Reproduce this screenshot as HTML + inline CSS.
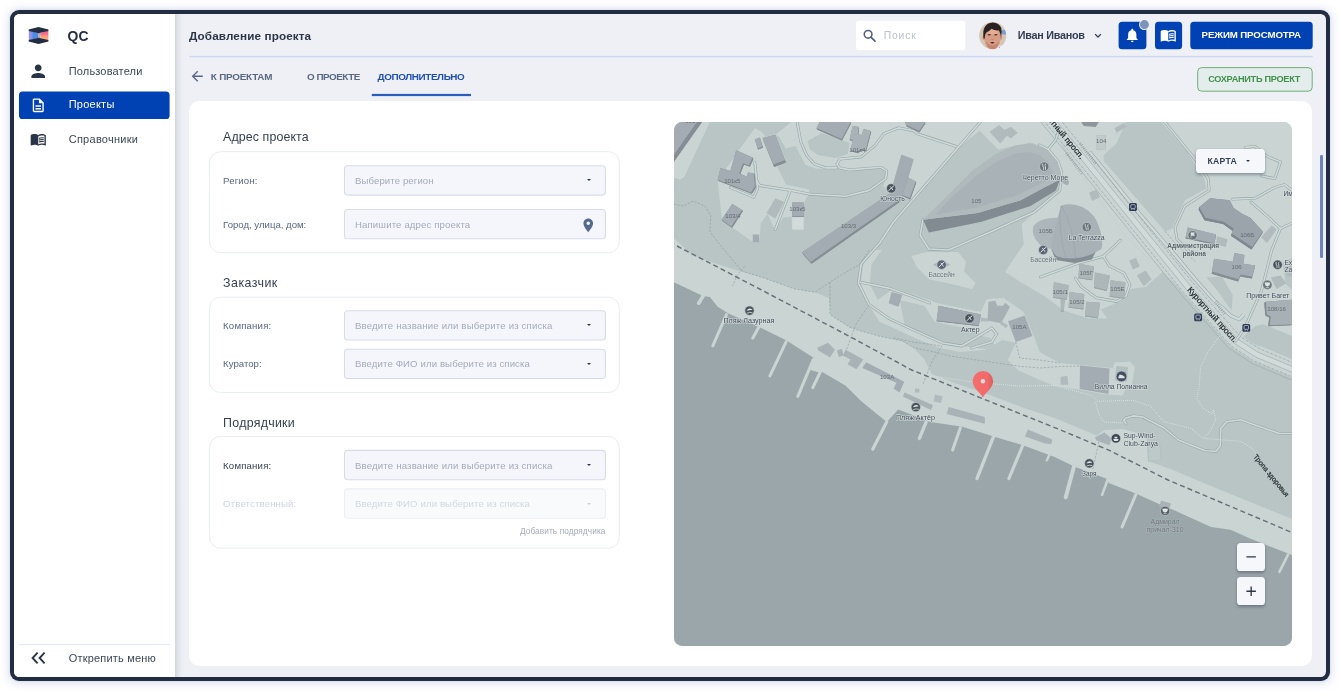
<!DOCTYPE html>
<html lang="ru">
<head>
<meta charset="utf-8">
<title>Добавление проекта</title>
<style>
*{box-sizing:border-box;margin:0;padding:0}
html,body{width:1340px;height:691px;overflow:hidden;background:#fff}
body{position:relative;font-family:"Liberation Sans","DejaVu Sans",sans-serif;-webkit-font-smoothing:antialiased}
.abs,.t,.box{position:absolute}
.t{white-space:nowrap;line-height:1;z-index:5}
.frame{left:10px;top:10px;width:1320px;height:670.6px;border-radius:9px;background:#232d41;
  box-shadow:0 1px 10px 2px rgba(120,130,190,.22),0 0 3px rgba(120,130,190,.25)}
.inner{left:13.6px;top:13.6px;width:1312.8px;height:663.4px;border-radius:5.5px;background:#eef0f5;overflow:hidden}
.side{left:0;top:0;width:161.6px;height:100%;background:#fff}
.sideshadow{left:161.6px;top:0;width:10px;height:100%;background:linear-gradient(90deg,rgba(196,199,208,.62),rgba(212,215,223,.42) 35%,rgba(228,230,236,.18) 70%,rgba(238,240,245,0))}
.active{left:19px;top:91.6px;width:150.6px;height:27.5px;border-radius:3.6px;background:#0041b4}
.sep{left:19.1px;top:644.2px;width:150.4px;height:1px;background:#dfe5fb}
.hline{left:189px;top:55.9px;width:1123.7px;height:1.4px;background:#cfd7f6}
.search{left:856px;top:20.8px;width:109.3px;height:29.3px;border-radius:2.8px;background:#fff}
.btn{border-radius:3.4px;background:#0041b4}
.save{left:1197.2px;top:67.1px;width:115.5px;height:24.6px;border-radius:4.2px;border:1px solid #74ae7b;background:#e3edeb}
.tabline{left:371.9px;top:94px;width:99.2px;height:2.1px;background:#2a5bbd}
.panel{left:189px;top:101px;width:1123px;height:565px;border-radius:10.3px;background:#fff}
.card{left:209.1px;width:410.7px;border-radius:11.5px;border:1px solid #eaedf5;background:#fff;box-shadow:0 0 2px rgba(222,226,240,.35)}
.inp{left:344.2px;width:261.3px;height:29.8px;border-radius:3.6px;border:1px solid #d6dbea;background:#f4f5fa}
.inp.dis{border-color:#eceef5;background:#f8f9fc}
.caret{width:0;height:0;border-left:2.35px solid transparent;border-right:2.35px solid transparent;border-top:2.7px solid #2c3648}
.mapwrap{left:674.3px;top:122px;width:618px;height:524px;border-radius:8.5px;overflow:hidden;background:#c5d1d0}
svg.map{position:absolute;left:0;top:0;display:block}
.mbtn{background:#f6f7fb;border-radius:3.6px;box-shadow:0 1.5px 3px rgba(40,50,70,.38)}
.scroll{left:1320.3px;top:155px;width:2.4px;height:103px;border-radius:1.2px;background:#6c84ba}
svg.ic{position:absolute;overflow:visible}
</style>
</head>
<body>
<div class="abs" id="root" style="left:0;top:0;width:1340px;height:691px;will-change:transform">
<div class="abs frame"></div>
<div class="abs inner">
  <div class="abs side"></div>
  <div class="abs sideshadow"></div>
</div>

<!-- shapes (SVG for sub-pixel edges) -->
<svg class="ic" style="left:0;top:0" width="1340" height="691" viewBox="0 0 1340 691">
<rect x="19" y="91.5" width="150.6" height="27.5" rx="3.6" fill="#0041b4"/>
<rect x="19.1" y="644.1" width="150.4" height="1" fill="#dfe5fb"/>
<rect x="189" y="55.9" width="1123.7" height="1.4" fill="#cfd7f6"/>
<rect x="856" y="20.8" width="109.3" height="29.3" rx="2.8" fill="#fff"/>
<rect x="1118.6" y="21.8" width="27.8" height="27.4" rx="3.5" fill="#0041b4"/>
<rect x="1155" y="21.8" width="27.1" height="27.4" rx="3.5" fill="#0041b4"/>
<rect x="1190.3" y="21.8" width="122.4" height="27.4" rx="3.5" fill="#0041b4"/>
<circle cx="1144.4" cy="24.6" r="5.4" fill="#eef0f5"/><circle cx="1144.4" cy="24.6" r="4.5" fill="#7d93ba"/>
<rect x="1197.7" y="67.6" width="114.5" height="23.6" rx="4" fill="#e3edeb" stroke="#74ae7b" stroke-width="1"/>
<rect x="371.8" y="93.9" width="99.2" height="2.2" fill="#2a5bbd"/>
</svg>
<div class="abs panel"></div>
<svg class="ic" style="left:0;top:0" width="1340" height="691" viewBox="0 0 1340 691">
<g fill="#fff" stroke="#e9ecf4" stroke-width="1">
<rect x="209.6" y="151.7" width="409.7" height="101" rx="11"/>
<rect x="209.6" y="297.2" width="409.7" height="95.4" rx="11"/>
<rect x="209.6" y="436.4" width="409.7" height="111.8" rx="11"/>
</g>
<g fill="#f5f6fb" stroke="#d8dcea" stroke-width="1.1">
<rect x="344.5" y="165.8" width="260.9" height="29.3" rx="3.3"/>
<rect x="344.5" y="209.5" width="260.9" height="29.3" rx="3.3"/>
<rect x="344.5" y="310.7" width="260.9" height="29.3" rx="3.3"/>
<rect x="344.5" y="349.2" width="260.9" height="29.3" rx="3.3"/>
<rect x="344.5" y="450.4" width="260.9" height="29.3" rx="3.3"/>
</g>
<rect x="344.5" y="488.9" width="260.900" height="29.300" rx="3.300" fill="#f9fafc" stroke="#eceef5" stroke-width="1.100"/>
</svg>

<div class="abs caret" style="left:587px;top:179.4px"></div>
<div class="abs caret" style="left:587px;top:324.4px"></div>
<div class="abs caret" style="left:587px;top:362.9px"></div>
<div class="abs caret" style="left:587px;top:464.2px"></div>
<div class="abs caret" style="left:587px;top:502.7px;border-top-color:#cdd2dd"></div>

<!-- map -->
<div class="abs mapwrap">
<svg class="map" viewBox="674.3 122 618 524" width="618" height="524" font-family="'Liberation Sans','DejaVu Sans',sans-serif">
<rect x="670" y="118" width="630" height="536" fill="#c9d4d3"/>
<polygon points="674.0,122.0 1050.0,122.0 1060.0,140.0 1075.0,165.0 1100.0,200.0 1125.0,235.0 1146.0,256.0 1185.0,293.0 1226.0,338.0 1255.0,357.0 1292.5,373.0 1292.5,519.0 1250.4,502.0 1199.7,481.2 1173.4,469.9 1148.4,461.0 1147.0,438.0 1138.0,433.0 1123.0,429.0 1104.8,430.0 1097.0,435.5 1055.0,417.9 1027.2,409.1 986.1,393.5 956.8,383.7 932.4,373.9 925.0,360.0 914.0,347.7 902.6,340.9 879.2,336.0 857.7,330.1 849.9,327.2 836.2,318.4 831.0,315.0 829.0,298.0 815.1,292.2 794.4,288.8 764.3,277.9 736.1,270.0 693.5,256.0 674.0,238.0" fill="#b8c5c4"/>
<polygon points="701.4,122.0 710.2,122.0 684.7,176.7 680.8,179.7 674.0,177.7 674.0,161.0" fill="#c9d4d3"/>
<polygon points="755.1,127.9 761.4,131.4 765.9,136.7 775.6,134.0 786.5,161.1 777.6,167.0 786.4,184.5 809.8,189.4 808.8,194.3 804.5,202.5 804.0,229.5 792.6,229.1 791.8,216.8 783.4,217.8 775.6,230.5 767.8,213.9 761.0,223.6 760.0,239.3 752.2,241.2 732.6,227.5 721.9,217.8 718.0,180.6 738.5,151.3" fill="#c9d4d3"/>
<polygon points="775.6,135.0 791.3,122.0 797.1,122.0 799.1,135.0 803.0,150.7 812.1,163.7 834.0,167.6 834.0,168.8 816.0,168.4 805.6,164.8 795.8,146.1 786.0,148.5 779.0,136.3" fill="#c9d4d3"/>
<polygon points="797.0,122.0 801.0,141.5 806.9,155.2 814.7,164.0 826.4,167.9 840.1,168.2 849.9,170.2 881.2,167.6 886.6,171.0 885.8,178.7 883.5,186.0 889.0,193.5 903.0,198.0 910.0,199.5 913.0,202.0 921.0,192.0 933.0,176.7 958.5,147.4 980.0,130.8 998.5,149.4 1030.8,142.5 1048.4,148.4 1056.0,157.0 1068.0,156.0 1050.0,122.0" fill="#c9d4d3"/>
<polygon points="1056.0,157.0 1063.0,180.6 1060.1,192.4 1034.7,212.9 1022.0,224.0 1024.0,244.0 1005.4,271.9 1021.0,282.2 1044.5,295.9 1064.0,310.6 1089.4,318.4 1107.9,318.4 1101.0,309.6 1124.5,299.8 1131.3,289.1 1146.0,287.1 1163.6,271.5 1146.0,256.0 1125.0,235.0 1100.0,200.0 1075.0,165.0 1068.0,156.0" fill="#c9d4d3"/>
<polygon points="911.6,255.9 927.2,252.0 958.5,252.0 966.3,261.7 964.4,271.5 976.1,283.2 972.2,289.1 952.6,284.2 929.2,279.3 917.5,267.6" fill="#c9d4d3"/>
<polygon points="894.0,288.0 930.0,300.0 937.0,303.0 981.0,312.0 987.0,299.0 1004.0,298.0 1024.0,312.0 1035.0,338.0 1040.0,352.0 1060.0,363.0 1081.0,365.0 1133.0,370.0 1130.0,382.0 1123.0,395.4 1105.8,394.4 1078.5,389.5 1055.0,386.0 1040.0,380.0 1018.0,370.0 1008.0,360.0 1016.0,343.0 1003.0,340.0 985.0,350.0 960.0,352.0 940.0,348.0 915.0,338.0 894.0,328.0 880.0,322.0 869.0,305.0 861.0,284.0 864.0,262.0 875.0,250.0 882.0,250.0 872.0,264.0 870.0,284.0 878.0,300.0" fill="#c9d4d3"/>
<polygon points="1114.7,362.4 1130.4,361.4 1135.2,367.3 1132.3,385.0 1108.9,385.0" fill="#c9d4d3"/>
<polygon points="808.0,141.0 822.0,133.0 850.0,143.0 848.0,154.0 836.0,158.0 818.0,155.0 810.0,149.0" fill="#b8c5c4"/>
<polygon points="933.1,264.7 941.9,260.3 950.7,264.7 941.9,269.1" fill="#aab5b8"/>
<polygon points="940.0,326.0 975.0,334.0 990.0,338.0 1000.0,352.0 985.0,349.0 960.0,346.0 938.0,340.0" fill="#b8c5c4"/>
<polygon points="900.0,300.0 925.0,306.0 935.0,322.0 975.0,330.0 985.0,338.0 960.0,345.0 930.0,338.0 905.0,325.0" fill="#b8c5c4"/>
<polygon points="1126.4,122.0 1161.6,122.0 1187.0,151.3 1204.6,178.7 1206.6,188.4 1185.1,200.2 1172.4,228.5 1165.5,231.4 1104.0,161.1 1104.0,155.2 1116.7,143.5" fill="#b8c5c4"/>
<polygon points="1206.6,277.4 1222.2,276.4 1233.0,295.0 1232.0,310.6 1216.3,289.1" fill="#b8c5c4"/>
<polygon points="1243.7,336.0 1255.4,326.2 1263.2,324.3 1292.5,336.0 1292.5,359.4 1265.2,347.7 1247.6,341.9" fill="#b8c5c4"/>
<polygon points="1283.0,262.0 1292.5,258.0 1292.5,290.0 1286.0,284.0" fill="#b8c5c4"/>
<polyline points="1046.0,112.0 1054.0,122.0 1083.0,157.0 1136.0,222.5 1189.0,288.0 1236.0,341.0 1257.0,354.6 1292.0,369.2 1302.0,373.0" fill="none" stroke="#c9d4d3" stroke-width="15" stroke-linejoin="round"/>
<polyline points="1046.0,112.0 1054.0,122.0 1083.0,157.0 1136.0,222.5 1189.0,288.0 1236.0,341.0 1257.0,354.6 1292.0,369.2 1302.0,373.0" fill="none" stroke="#d1dbda" stroke-width="5.2" stroke-linejoin="round"/>
<polyline points="1048.1,110.3 1056.1,120.3 1085.1,155.3 1138.1,220.8 1191.1,286.3 1237.9,339.1 1258.2,352.2 1293.0,366.7 1303.0,370.5" fill="none" stroke="#9aa7a9" stroke-width="0.6"/>
<polyline points="1043.9,113.7 1051.9,123.7 1080.9,158.7 1133.9,224.2 1186.9,289.7 1234.1,342.9 1255.8,357.0 1291.0,371.7 1301.0,375.5" fill="none" stroke="#9aa7a9" stroke-width="0.6"/>
<polyline points="1051.1,107.9 1059.0,117.9 1088.0,152.9 1141.1,218.4 1194.0,283.8 1240.5,336.4 1259.9,348.8 1294.5,363.2 1304.3,366.9" fill="none" stroke="#8f9b9d" stroke-width="0.6" stroke-dasharray="3 1.600"/>
<polyline points="1040.7,116.2 1048.7,126.3 1077.7,161.3 1130.7,226.8 1183.8,292.4 1231.2,345.9 1253.9,360.7 1289.4,375.5 1299.6,379.4" fill="none" stroke="#8f9b9d" stroke-width="0.6" stroke-dasharray="3 1.600"/>
<polyline points="1038.2,118.2 1046.3,128.4 1075.3,163.3 1128.2,228.8 1181.4,294.4 1229.0,348.1 1252.5,363.5 1288.2,378.5 1298.4,382.3" fill="none" stroke="#9aa7a9" stroke-width="0.6"/>
<polyline points="1090.0,152.0 1140.0,214.0 1174.5,254.0 1197.0,281.0 1214.0,300.0 1231.0,315.6 1239.4,319.4 1244.0,314.7" fill="none" stroke="#9aa7a9" stroke-width="3.6" stroke-linejoin="round"/>
<polyline points="1090.0,152.0 1140.0,214.0 1174.5,254.0 1197.0,281.0 1214.0,300.0 1231.0,315.6 1239.4,319.4 1244.0,314.7" fill="none" stroke="#cfd9d8" stroke-width="2.6" stroke-linejoin="round"/>
<line x1="1080.3" y1="143.3" x2="1096.3" y2="164.2" stroke="#8b9698" stroke-width="3.200" stroke-dasharray="0.500 1.600"/>
<line x1="1066.7" y1="153.1" x2="1082.7" y2="174" stroke="#8b9698" stroke-width="3.200" stroke-dasharray="0.500 1.600"/>
<line x1="1215.9" y1="301.5" x2="1225.3" y2="314.7" stroke="#8b9698" stroke-width="3.200" stroke-dasharray="0.500 1.600"/>
<polyline points="755.1,162.1 757.0,180.6 760.0,185.5 791.3,190.4 810.8,194.3 846.0,196.3 869.4,190.4 886.0,178.7 887.0,170.9 881.2,167.3 849.9,169.9 840.1,167.9 837.2,164.0 840.1,159.1 861.6,156.8 875.3,145.5 884.1,133.7 898.7,127.9 914.0,130.8 917.5,133.7 956.5,146.4" fill="none" stroke="#9aa7a9" stroke-width="2.8" stroke-linejoin="round" stroke-linecap="round"/>
<polyline points="757.0,180.6 758.0,188.4 754.1,197.2 730.7,187.5" fill="none" stroke="#9aa7a9" stroke-width="2.8" stroke-linejoin="round" stroke-linecap="round"/>
<polyline points="797.1,120.0 801.0,141.5 806.9,155.2 814.7,164.0 826.4,167.9 837.2,167.9" fill="none" stroke="#9aa7a9" stroke-width="2.8" stroke-linejoin="round" stroke-linecap="round"/>
<polyline points="790.3,191.4 775.6,229.5" fill="none" stroke="#9aa7a9" stroke-width="2.8" stroke-linejoin="round" stroke-linecap="round"/>
<polyline points="880.0,243.0 894.0,221.7 933.0,176.7 958.5,147.4 984.0,118.0" fill="none" stroke="#9aa7a9" stroke-width="2.8" stroke-linejoin="round" stroke-linecap="round"/>
<polyline points="923.3,219.7 920.4,235.3 929.2,249.0 948.7,250.0 991.7,231.4 1034.7,211.9 1060.1,190.4 1062.1,172.8 1058.2,161.1 1048.4,149.4 1040.0,145.0" fill="none" stroke="#9aa7a9" stroke-width="2.8" stroke-linejoin="round" stroke-linecap="round"/>
<polyline points="1048.4,149.4 1056.0,140.0 1060.0,128.0" fill="none" stroke="#9aa7a9" stroke-width="2.8" stroke-linejoin="round" stroke-linecap="round"/>
<polyline points="880.0,243.0 861.6,263.7 858.7,283.2 869.4,304.7 889.0,318.4 914.0,330.1 943.0,343.0 962.0,346.0 976.0,338.0 992.0,328.0 997.0,334.0 992.0,342.0 972.0,348.0" fill="none" stroke="#9aa7a9" stroke-width="2.8" stroke-linejoin="round" stroke-linecap="round"/>
<polyline points="860.6,282.2 889.0,288.1 914.0,296.9 930.0,303.0" fill="none" stroke="#9aa7a9" stroke-width="2.8" stroke-linejoin="round" stroke-linecap="round"/>
<polyline points="1163.6,120.0 1196.8,161.1 1208.5,178.7 1209.5,190.4 1185.1,206.0 1175.3,227.5 1177.3,239.3 1190.0,252.0" fill="none" stroke="#9aa7a9" stroke-width="2.8" stroke-linejoin="round" stroke-linecap="round"/>
<polyline points="1245.7,147.4 1255.4,146.4 1267.2,156.2 1280.8,162.1 1275.0,178.7 1262.0,176.0" fill="none" stroke="#9aa7a9" stroke-width="2.8" stroke-linejoin="round" stroke-linecap="round"/>
<polyline points="1233.0,199.2 1255.4,198.2 1275.0,187.5 1284.7,184.5 1300.0,196.3" fill="none" stroke="#9aa7a9" stroke-width="2.8" stroke-linejoin="round" stroke-linecap="round"/>
<polyline points="1251.5,202.1 1267.2,215.8 1280.8,228.5 1300.0,219.7" fill="none" stroke="#9aa7a9" stroke-width="2.8" stroke-linejoin="round" stroke-linecap="round"/>
<polyline points="1280.8,228.5 1272.0,250.0 1262.0,290.0 1245.0,328.0 1236.0,341.0" fill="none" stroke="#9aa7a9" stroke-width="2.8" stroke-linejoin="round" stroke-linecap="round"/>
<polyline points="1126.3,424.0 1124.0,420.0 1126.3,417.9 1133.2,415.9 1142.9,416.9 1164.4,428.0 1178.8,440.0 1193.7,446.0 1205.7,450.7 1216.4,451.3 1220.5,446.0 1221.1,428.6 1227.0,421.8 1240.7,419.8 1260.2,426.7 1279.7,433.5 1296.0,433.5" fill="none" stroke="#9aa7a9" stroke-width="2.8" stroke-linejoin="round" stroke-linecap="round"/>
<polyline points="1040.8,277.0 1079.4,262.9 1103.8,256.3 1120.8,240.3" fill="none" stroke="#9aa7a9" stroke-width="2.8" stroke-linejoin="round" stroke-linecap="round"/>
<polyline points="1103.8,256.3 1109.5,265.7 1124.5,273.3 1130.2,284.6 1126.4,295.9 1117.0,301.5 1096.3,297.7 1081.2,286.4 1075.6,278.0" fill="none" stroke="#9aa7a9" stroke-width="2.8" stroke-linejoin="round" stroke-linecap="round"/>
<polyline points="755.1,162.1 757.0,180.6 760.0,185.5 791.3,190.4 810.8,194.3 846.0,196.3 869.4,190.4 886.0,178.7 887.0,170.9 881.2,167.3 849.9,169.9 840.1,167.9 837.2,164.0 840.1,159.1 861.6,156.8 875.3,145.5 884.1,133.7 898.7,127.9 914.0,130.8 917.5,133.7 956.5,146.4" fill="none" stroke="#cfd9d8" stroke-width="1.6" stroke-linejoin="round" stroke-linecap="round"/>
<polyline points="757.0,180.6 758.0,188.4 754.1,197.2 730.7,187.5" fill="none" stroke="#cfd9d8" stroke-width="1.6" stroke-linejoin="round" stroke-linecap="round"/>
<polyline points="797.1,120.0 801.0,141.5 806.9,155.2 814.7,164.0 826.4,167.9 837.2,167.9" fill="none" stroke="#cfd9d8" stroke-width="1.6" stroke-linejoin="round" stroke-linecap="round"/>
<polyline points="790.3,191.4 775.6,229.5" fill="none" stroke="#cfd9d8" stroke-width="1.6" stroke-linejoin="round" stroke-linecap="round"/>
<polyline points="880.0,243.0 894.0,221.7 933.0,176.7 958.5,147.4 984.0,118.0" fill="none" stroke="#cfd9d8" stroke-width="1.6" stroke-linejoin="round" stroke-linecap="round"/>
<polyline points="923.3,219.7 920.4,235.3 929.2,249.0 948.7,250.0 991.7,231.4 1034.7,211.9 1060.1,190.4 1062.1,172.8 1058.2,161.1 1048.4,149.4 1040.0,145.0" fill="none" stroke="#cfd9d8" stroke-width="1.6" stroke-linejoin="round" stroke-linecap="round"/>
<polyline points="1048.4,149.4 1056.0,140.0 1060.0,128.0" fill="none" stroke="#cfd9d8" stroke-width="1.6" stroke-linejoin="round" stroke-linecap="round"/>
<polyline points="880.0,243.0 861.6,263.7 858.7,283.2 869.4,304.7 889.0,318.4 914.0,330.1 943.0,343.0 962.0,346.0 976.0,338.0 992.0,328.0 997.0,334.0 992.0,342.0 972.0,348.0" fill="none" stroke="#cfd9d8" stroke-width="1.6" stroke-linejoin="round" stroke-linecap="round"/>
<polyline points="860.6,282.2 889.0,288.1 914.0,296.9 930.0,303.0" fill="none" stroke="#cfd9d8" stroke-width="1.6" stroke-linejoin="round" stroke-linecap="round"/>
<polyline points="1163.6,120.0 1196.8,161.1 1208.5,178.7 1209.5,190.4 1185.1,206.0 1175.3,227.5 1177.3,239.3 1190.0,252.0" fill="none" stroke="#cfd9d8" stroke-width="1.6" stroke-linejoin="round" stroke-linecap="round"/>
<polyline points="1245.7,147.4 1255.4,146.4 1267.2,156.2 1280.8,162.1 1275.0,178.7 1262.0,176.0" fill="none" stroke="#cfd9d8" stroke-width="1.6" stroke-linejoin="round" stroke-linecap="round"/>
<polyline points="1233.0,199.2 1255.4,198.2 1275.0,187.5 1284.7,184.5 1300.0,196.3" fill="none" stroke="#cfd9d8" stroke-width="1.6" stroke-linejoin="round" stroke-linecap="round"/>
<polyline points="1251.5,202.1 1267.2,215.8 1280.8,228.5 1300.0,219.7" fill="none" stroke="#cfd9d8" stroke-width="1.6" stroke-linejoin="round" stroke-linecap="round"/>
<polyline points="1280.8,228.5 1272.0,250.0 1262.0,290.0 1245.0,328.0 1236.0,341.0" fill="none" stroke="#cfd9d8" stroke-width="1.6" stroke-linejoin="round" stroke-linecap="round"/>
<polyline points="1126.3,424.0 1124.0,420.0 1126.3,417.9 1133.2,415.9 1142.9,416.9 1164.4,428.0 1178.8,440.0 1193.7,446.0 1205.7,450.7 1216.4,451.3 1220.5,446.0 1221.1,428.6 1227.0,421.8 1240.7,419.8 1260.2,426.7 1279.7,433.5 1296.0,433.5" fill="none" stroke="#cfd9d8" stroke-width="1.6" stroke-linejoin="round" stroke-linecap="round"/>
<polyline points="1040.8,277.0 1079.4,262.9 1103.8,256.3 1120.8,240.3" fill="none" stroke="#cfd9d8" stroke-width="1.6" stroke-linejoin="round" stroke-linecap="round"/>
<polyline points="1103.8,256.3 1109.5,265.7 1124.5,273.3 1130.2,284.6 1126.4,295.9 1117.0,301.5 1096.3,297.7 1081.2,286.4 1075.6,278.0" fill="none" stroke="#cfd9d8" stroke-width="1.6" stroke-linejoin="round" stroke-linecap="round"/>
<polyline points="674.0,204.1 683.8,206.0 693.5,201.1 705.3,206.0 711.1,215.8 710.2,231.4 718.9,243.2 728.0,254.0 742.0,271.0 764.3,277.9 794.4,288.8 815.1,292.2 830.2,282.2 843.3,273.8 859.7,264.7 869.4,250.0" fill="none" stroke="#8d999b" stroke-width="0.6" stroke-dasharray="2.2 1.500"/>
<polyline points="830.2,282.2 830.3,314.5 836.2,318.4 849.9,327.2 857.7,330.1 879.2,336.0 902.6,340.9 914.0,347.7 935.0,352.0 950.0,356.0 990.0,362.0 1018.0,366.0 1040.0,368.0 1060.0,366.5 1081.0,366.0" fill="none" stroke="#8d999b" stroke-width="0.6" stroke-dasharray="2.2 1.500"/>
<polyline points="869.4,304.7 855.7,325.2 846.0,352.0" fill="none" stroke="#8d999b" stroke-width="0.6" stroke-dasharray="2.2 1.500"/>
<polyline points="745.0,266.0 737.0,276.0 733.0,286.0" fill="none" stroke="#8d999b" stroke-width="0.6" stroke-dasharray="2.2 1.500"/>
<polyline points="894.0,338.0 913.0,342.0 942.0,346.0 933.0,360.0 923.0,385.0" fill="none" stroke="#8d999b" stroke-width="0.6" stroke-dasharray="2.2 1.500"/>
<polyline points="1016.0,342.0 1020.0,358.0 1040.0,360.0 1060.0,363.0" fill="none" stroke="#8d999b" stroke-width="0.6" stroke-dasharray="2.2 1.500"/>
<polyline points="1165.5,231.4 1178.0,246.0 1196.0,262.0" fill="none" stroke="#8d999b" stroke-width="0.6" stroke-dasharray="2.2 1.500"/>
<polyline points="1100.0,438.0 1093.0,470.0" fill="none" stroke="#8d999b" stroke-width="0.6" stroke-dasharray="2.2 1.500"/>
<polyline points="1055.0,385.6 1092.0,395.4 1098.0,401.3 1133.2,400.3 1150.8,406.2 1164.4,421.8 1191.8,428.6 1203.5,438.4 1240.7,441.3 1252.4,448.2 1262.0,462.0" fill="none" stroke="#dbe3e2" stroke-width="1.0" stroke-dasharray="0.900 1.100"/>
<polyline points="1096.0,402.0 1099.0,414.0 1104.0,422.0 1124.0,423.0" fill="none" stroke="#dbe3e2" stroke-width="1.0" stroke-dasharray="0.900 1.100"/>
<polyline points="920.0,376.0 940.0,377.0 965.0,381.0 995.0,384.0 1020.0,386.0 1055.0,385.6" fill="none" stroke="#dbe3e2" stroke-width="1.0" stroke-dasharray="0.900 1.100"/>
<polyline points="1220.2,336.0 1208.5,351.6 1200.7,367.3 1199.7,385.0 1197.0,398.0 1203.0,408.0 1212.0,414.0 1214.0,410.0 1216.0,420.0 1210.0,432.0 1203.5,438.4" fill="none" stroke="#dbe3e2" stroke-width="1.0" stroke-dasharray="0.900 1.100"/>
<polygon points="674.0,282.2 703.3,295.9 710.2,296.9 718.0,306.7 728.7,313.5 760.0,327.2 786.4,340.3 814.7,358.3 810.8,370.1 817.6,372.0 822.5,372.0 846.0,385.7 861.6,401.3 887.0,421.9 898.5,409.6 923.6,418.9 929.4,421.8 962.7,426.7 993.9,436.4 1023.2,445.2 1055.0,457.0 1074.5,466.5 1107.5,479.0 1109.0,483.0 1136.0,493.5 1162.5,505.4 1172.3,509.3 1211.3,526.9 1230.9,529.8 1250.4,538.6 1292.5,555.2 1292.5,650.0 674.0,650.0" fill="#9ba6aa"/>
<line x1="704.3" y1="294.6" x2="699.0" y2="303.2" stroke="#c9d4d3" stroke-width="3.6" stroke-linecap="round"/>
<line x1="726.8" y1="314.5" x2="713.1" y2="345.8" stroke="#c9d4d3" stroke-width="3" stroke-linecap="round"/>
<line x1="759.0" y1="327.2" x2="753.1" y2="338.0" stroke="#c9d4d3" stroke-width="3" stroke-linecap="round"/>
<line x1="786.4" y1="341.9" x2="770.2" y2="375.9" stroke="#c9d4d3" stroke-width="3" stroke-linecap="round"/>
<line x1="813.7" y1="359.3" x2="798.1" y2="396.4" stroke="#c9d4d3" stroke-width="3" stroke-linecap="round"/>
<line x1="820.6" y1="372.0" x2="813.1" y2="387.7" stroke="#c9d4d3" stroke-width="3" stroke-linecap="round"/>
<line x1="887.0" y1="421.9" x2="873.0" y2="449.2" stroke="#c9d4d3" stroke-width="3.2" stroke-linecap="round"/>
<line x1="926.5" y1="421.8" x2="919.7" y2="438.4" stroke="#c9d4d3" stroke-width="3.4" stroke-linecap="round"/>
<line x1="960.7" y1="427.7" x2="952.9" y2="450.1" stroke="#c9d4d3" stroke-width="3" stroke-linecap="round"/>
<line x1="993.9" y1="436.4" x2="977.3" y2="478.5" stroke="#c9d4d3" stroke-width="3.4" stroke-linecap="round"/>
<line x1="1023.2" y1="445.2" x2="1009.2" y2="478.5" stroke="#c9d4d3" stroke-width="3.2" stroke-linecap="round"/>
<line x1="1050.6" y1="453.1" x2="1047.1" y2="460.3" stroke="#c9d4d3" stroke-width="2.4" stroke-linecap="round"/>
<line x1="1074.5" y1="465.8" x2="1066.0" y2="497.3" stroke="#c9d4d3" stroke-width="4" stroke-linecap="round"/>
<line x1="1108.2" y1="479.0" x2="1102.4" y2="494.9" stroke="#c9d4d3" stroke-width="2.6" stroke-linecap="round"/>
<line x1="1136.1" y1="494.7" x2="1122.4" y2="526.9" stroke="#c9d4d3" stroke-width="3" stroke-linecap="round"/>
<line x1="1288.5" y1="554.3" x2="1279.7" y2="571.9" stroke="#c9d4d3" stroke-width="2.6" stroke-linecap="round"/>
<polyline points="670.0,242.2 760.0,289.0 850.0,336.5 912.0,370.0 985.0,399.5 1060.0,429.6 1110.3,450.7 1168.3,480.0 1227.0,504.8 1296.0,534.1" fill="none" stroke="#687177" stroke-width="1.45" stroke-dasharray="5 3.200"/>
<polygon points="696.8,122.0 702.5,122.0 674.0,162.2 674.0,154.6" fill="#858d95"/>
<polygon points="674.0,120.0 696.8,122.0 674.0,154.6" fill="#a3acb2"/>
<polygon points="737.4,151.7 753.7,159.0 750.1,166.8 744.3,164.4 740.4,174.6 748.2,178.1 749.2,173.8 755.0,174.6 756.0,187.9 752.1,193.8 718.9,181.1 721.8,169.3 731.6,172.3" fill="#858d95"/>
<polygon points="736.5,150.3 752.8,157.6 753.7,159.0 737.4,151.7" fill="#858d95"/>
<polygon points="752.8,157.6 749.2,165.4 750.1,166.8 753.7,159.0" fill="#858d95"/>
<polygon points="749.2,165.4 743.4,163.0 744.3,164.4 750.1,166.8" fill="#858d95"/>
<polygon points="743.4,163.0 739.5,173.2 740.4,174.6 744.3,164.4" fill="#858d95"/>
<polygon points="739.5,173.2 747.3,176.7 748.2,178.1 740.4,174.6" fill="#858d95"/>
<polygon points="747.3,176.7 748.3,172.4 749.2,173.8 748.2,178.1" fill="#858d95"/>
<polygon points="748.3,172.4 754.1,173.2 755.0,174.6 749.2,173.8" fill="#858d95"/>
<polygon points="754.1,173.2 755.1,186.5 756.0,187.9 755.0,174.6" fill="#858d95"/>
<polygon points="755.1,186.5 751.2,192.4 752.1,193.8 756.0,187.9" fill="#858d95"/>
<polygon points="751.2,192.4 718.0,179.7 718.9,181.1 752.1,193.8" fill="#858d95"/>
<polygon points="718.0,179.7 720.9,167.9 721.8,169.3 718.9,181.1" fill="#858d95"/>
<polygon points="720.9,167.9 730.7,170.9 731.6,172.3 721.8,169.3" fill="#858d95"/>
<polygon points="730.7,170.9 736.5,150.3 737.4,151.7 731.6,172.3" fill="#858d95"/>
<polygon points="736.5,150.3 752.8,157.6 749.2,165.4 743.4,163.0 739.5,173.2 747.3,176.7 748.3,172.4 754.1,173.2 755.1,186.5 751.2,192.4 718.0,179.7 720.9,167.9 730.7,170.9" fill="#a3acb2"/>
<polygon points="763.7,140.4 776.4,137.1 786.2,162.5 774.5,167.0" fill="#858d95"/>
<polygon points="762.9,138.0 775.6,134.7 776.4,137.1 763.7,140.4" fill="#858d95"/>
<polygon points="775.6,134.7 785.4,160.1 786.2,162.5 776.4,137.1" fill="#858d95"/>
<polygon points="785.4,160.1 773.7,164.6 774.5,167.0 786.2,162.5" fill="#858d95"/>
<polygon points="773.7,164.6 762.9,138.0 763.7,140.4 774.5,167.0" fill="#858d95"/>
<polygon points="762.9,138.0 775.6,134.7 785.4,160.1 773.7,164.6" fill="#a3acb2"/>
<polygon points="755.6,140.8 760.5,138.8 763.4,147.6 758.5,149.6" fill="#858d95"/>
<polygon points="755.1,139.6 760.0,137.6 760.5,138.8 755.6,140.8" fill="#858d95"/>
<polygon points="760.0,137.6 762.9,146.4 763.4,147.6 760.5,138.8" fill="#858d95"/>
<polygon points="762.9,146.4 758.0,148.4 758.5,149.6 763.4,147.6" fill="#858d95"/>
<polygon points="758.0,148.4 755.1,139.6 755.6,140.8 758.5,149.6" fill="#858d95"/>
<polygon points="755.1,139.6 760.0,137.6 762.9,146.4 758.0,148.4" fill="#a3acb2"/>
<polygon points="733.4,205.3 743.2,211.1 732.5,227.8 722.7,220.9" fill="#858d95"/>
<polygon points="732.6,204.1 742.4,209.9 743.2,211.1 733.4,205.3" fill="#858d95"/>
<polygon points="742.4,209.9 731.7,226.6 732.5,227.8 743.2,211.1" fill="#858d95"/>
<polygon points="731.7,226.6 721.9,219.7 722.7,220.9 732.5,227.8" fill="#858d95"/>
<polygon points="721.9,219.7 732.6,204.1 733.4,205.3 722.7,220.9" fill="#858d95"/>
<polygon points="732.6,204.1 742.4,209.9 731.7,226.6 721.9,219.7" fill="#a3acb2"/>
<polygon points="753.1,234.4 759.4,234.4 759.4,242.2 753.1,242.2" fill="#a3acb2"/>
<polygon points="775.6,198.2 784.4,202.1 775.6,218.7 766.8,212.9" fill="#b1bbbd"/>
<polygon points="792.6,203.4 804.0,203.4 804.0,217.1 792.6,217.1" fill="#858d95"/>
<polygon points="792.6,202.5 804.0,202.5 804.0,203.4 792.6,203.4" fill="#858d95"/>
<polygon points="804.0,202.5 804.0,216.2 804.0,217.1 804.0,203.4" fill="#858d95"/>
<polygon points="804.0,216.2 792.6,216.2 792.6,217.1 804.0,217.1" fill="#858d95"/>
<polygon points="792.6,216.2 792.6,202.5 792.6,203.4 792.6,217.1" fill="#858d95"/>
<polygon points="792.6,202.5 804.0,202.5 804.0,216.2 792.6,216.2" fill="#a3acb2"/>
<polygon points="792.6,217.4 803.6,217.4 803.6,229.5 792.6,229.5" fill="#d2dbda"/>
<polygon points="803.4,254.2 891.9,194.9 903.9,199.3 811.8,263.8" fill="#858d95"/>
<polygon points="802.5,252.3 891.0,193.0 891.9,194.9 803.4,254.2" fill="#858d95"/>
<polygon points="891.0,193.0 903.0,197.4 903.9,199.3 891.9,194.9" fill="#858d95"/>
<polygon points="903.0,197.4 810.9,261.9 811.8,263.8 903.9,199.3" fill="#858d95"/>
<polygon points="810.9,261.9 802.5,252.3 803.4,254.2 811.8,263.8" fill="#858d95"/>
<polygon points="802.5,252.3 891.0,193.0 903.0,197.4 810.9,261.9" fill="#a3acb2"/>
<polygon points="901.6,154.4 914.1,159.2 902.8,197.4 890.9,192.6" fill="#a3acb2"/>
<polygon points="908.8,178.9 916.5,182.7 910.5,199.4 903.3,196.3" fill="#858d95"/>
<polygon points="908.3,177.6 916.0,181.4 916.5,182.7 908.8,178.9" fill="#858d95"/>
<polygon points="916.0,181.4 910.0,198.1 910.5,199.4 916.5,182.7" fill="#858d95"/>
<polygon points="910.0,198.1 902.8,195.0 903.3,196.3 910.5,199.4" fill="#858d95"/>
<polygon points="902.8,195.0 908.3,177.6 908.8,178.9 903.3,196.3" fill="#858d95"/>
<polygon points="908.3,177.6 916.0,181.4 910.0,198.1 902.8,195.0" fill="#a8b1b6"/>
<polygon points="820.3,123.6 851.3,123.6 842.3,140.6 817.3,129.6" fill="#858d95"/>
<polygon points="820.0,122.0 851.0,122.0 851.3,123.6 820.3,123.6" fill="#858d95"/>
<polygon points="851.0,122.0 842.0,139.0 842.3,140.6 851.3,123.6" fill="#858d95"/>
<polygon points="842.0,139.0 817.0,128.0 817.3,129.6 842.3,140.6" fill="#858d95"/>
<polygon points="817.0,128.0 820.0,122.0 820.3,123.6 817.3,129.6" fill="#858d95"/>
<polygon points="820.0,122.0 851.0,122.0 842.0,139.0 817.0,128.0" fill="#a3acb2"/>
<polygon points="853.4,127.2 859.4,128.2 858.4,135.2 862.4,136.2 864.4,130.2 871.4,132.2 866.4,151.2 861.4,150.2 858.4,153.2 851.4,151.2 853.4,141.2 850.4,140.2" fill="#858d95"/>
<polygon points="853.0,126.0 859.0,127.0 859.4,128.2 853.4,127.2" fill="#858d95"/>
<polygon points="859.0,127.0 858.0,134.0 858.4,135.2 859.4,128.2" fill="#858d95"/>
<polygon points="858.0,134.0 862.0,135.0 862.4,136.2 858.4,135.2" fill="#858d95"/>
<polygon points="862.0,135.0 864.0,129.0 864.4,130.2 862.4,136.2" fill="#858d95"/>
<polygon points="864.0,129.0 871.0,131.0 871.4,132.2 864.4,130.2" fill="#858d95"/>
<polygon points="871.0,131.0 866.0,150.0 866.4,151.2 871.4,132.2" fill="#858d95"/>
<polygon points="866.0,150.0 861.0,149.0 861.4,150.2 866.4,151.2" fill="#858d95"/>
<polygon points="861.0,149.0 858.0,152.0 858.4,153.2 861.4,150.2" fill="#858d95"/>
<polygon points="858.0,152.0 851.0,150.0 851.4,151.2 858.4,153.2" fill="#858d95"/>
<polygon points="851.0,150.0 853.0,140.0 853.4,141.2 851.4,151.2" fill="#858d95"/>
<polygon points="853.0,140.0 850.0,139.0 850.4,140.2 853.4,141.2" fill="#858d95"/>
<polygon points="850.0,139.0 853.0,126.0 853.4,127.2 850.4,140.2" fill="#858d95"/>
<polygon points="853.0,126.0 859.0,127.0 858.0,134.0 862.0,135.0 864.0,129.0 871.0,131.0 866.0,150.0 861.0,149.0 858.0,152.0 851.0,150.0 853.0,140.0 850.0,139.0" fill="#a9b2b7"/>
<polygon points="906.0,123.4 925.6,123.4 919.7,132.2 907.0,126.4" fill="#858d95"/>
<polygon points="905.7,122.0 925.3,122.0 925.6,123.4 906.0,123.4" fill="#858d95"/>
<polygon points="925.3,122.0 919.4,130.8 919.7,132.2 925.6,123.4" fill="#858d95"/>
<polygon points="919.4,130.8 906.7,125.0 907.0,126.4 919.7,132.2" fill="#858d95"/>
<polygon points="906.7,125.0 905.7,122.0 906.0,123.4 907.0,126.4" fill="#858d95"/>
<polygon points="905.7,122.0 925.3,122.0 919.4,130.8 906.7,125.0" fill="#a3acb2"/>
<polygon points="989.8,131.8 999.5,124.9 1004.4,129.8 1011.3,126.9 1018.1,132.7 1011.3,138.6 1007.3,135.7 1000.5,143.5" fill="#b1bbbd"/>
<polygon points="1081.6,122.0 1099.2,122.0 1096.0,127.0 1084.0,126.0" fill="#8d959d"/>
<polygon points="1114.8,127.9 1124.6,123.0 1126.6,126.9 1116.8,132.7" fill="#b1bbbd"/>
<rect x="1097.2" y="135.7" width="8.8" height="13.7" fill="#c0cbca" stroke="#aab5b6" stroke-width="0.4"/>
<polygon points="1089.4,192.4 1097.2,189.4 1100.2,197.2 1092.4,201.1" fill="#b1bbbd"/>
<polygon points="923.3,219.7 978.0,212.9 1021.0,200.2 1046.4,186.5 1060.1,179.7 1056.2,190.4 1030.8,206.0 981.9,221.7 929.2,232.4" fill="#828a92"/>
<polygon points="923.3,219.7 942.9,200.2 972.2,170.9 995.6,154.2 1015.2,145.5 1030.8,143.5 1042.5,147.4 1054.2,157.2 1060.1,168.9 1060.1,179.7 1046.4,186.5 1021.0,200.2 978.0,212.9" fill="#b0babd"/>
<polygon points="936.0,214.5 950.0,199.0 976.0,176.0 998.0,161.0 1016.0,153.5 1030.0,152.0 1040.0,155.0 1049.0,163.0 1053.0,172.0 1052.0,178.0 1041.0,183.5 1018.0,195.0 977.0,207.5" fill="#a9b2b6"/>
<ellipse cx="1065.500" cy="181.500" rx="4.200" ry="2.600" transform="rotate(35 1065.5 181.5)" fill="#a5aeb3"/>
<polygon points="1051.6,249.0 1075.5,257.3 1097.0,250.0 1092.0,259.5 1075.0,263.0 1056.0,260.0" fill="#858d95"/>
<path d="M1033.7,226 Q1040,217 1061.200,217.700 L1058.800,248.700 Q1045,250 1039.700,244 Q1031,235 1033.700,226 Z" fill="#adb6ba"/>
<path d="M1061.200,205.700 Q1072,202.500 1082.700,206.900 Q1096,214 1099.400,227.200 Q1104,240 1101.800,248.700 Q1090,257 1075.500,258.300 Q1064,259 1056.400,255.900 Q1051,250 1051.600,244 Q1056,225 1061.200,205.700 Z" fill="#a8b1b6"/>
<path d="M1061.200,205.700 Q1058,230 1066,257.500 M1062,206 Q1074,228 1076,258" fill="none" stroke="#98a1a7" stroke-width="0.500"/>
<polygon points="891.9,292.0 902.6,294.9 898.7,306.7 889.0,303.2" fill="#a3acb2"/>
<polygon points="938.9,306.5 981.0,315.3 979.0,326.0 937.0,321.2" fill="#858d95"/>
<polygon points="938.9,305.7 981.0,314.5 981.0,315.3 938.9,306.5" fill="#858d95"/>
<polygon points="981.0,314.5 979.0,325.2 979.0,326.0 981.0,315.3" fill="#858d95"/>
<polygon points="979.0,325.2 937.0,320.4 937.0,321.2 979.0,326.0" fill="#858d95"/>
<polygon points="937.0,320.4 938.9,305.7 938.9,306.5 937.0,321.2" fill="#858d95"/>
<polygon points="938.9,305.7 981.0,314.5 979.0,325.2 937.0,320.4" fill="#a3acb2"/>
<polygon points="981.0,317.5 988.8,318.5 988.8,321.5 981.0,321.5" fill="#b1bbbd"/>
<polygon points="988.8,301.8 995.6,300.8 997.6,305.7 1003.4,305.7 1005.4,302.8 1010.3,306.7 1001.5,323.3 987.8,320.4" fill="#a7b0b5"/>
<polygon points="1001.5,321.3 1008.3,325.2 1006.4,328.2 1000.5,324.3" fill="#b1bbbd"/>
<polygon points="1008.3,321.3 1024.9,315.5 1032.8,336.0 1016.1,341.9" fill="#a3acb2"/>
<polygon points="1079.7,264.6 1094.3,267.5 1092.4,280.2 1078.7,278.3" fill="#98a2a6"/>
<polygon points="1079.7,263.7 1094.3,266.6 1094.3,267.5 1079.7,264.6" fill="#98a2a6"/>
<polygon points="1094.3,266.6 1092.4,279.3 1092.4,280.2 1094.3,267.5" fill="#98a2a6"/>
<polygon points="1092.4,279.3 1078.7,277.4 1078.7,278.3 1092.4,280.2" fill="#98a2a6"/>
<polygon points="1078.7,277.4 1079.7,263.7 1079.7,264.6 1078.7,278.3" fill="#98a2a6"/>
<polygon points="1079.7,263.7 1094.3,266.6 1092.4,279.3 1078.7,277.4" fill="#adb7b9"/>
<polygon points="1095.3,273.4 1110.0,276.3 1107.0,291.0 1094.3,288.0" fill="#98a2a6"/>
<polygon points="1095.3,272.5 1110.0,275.4 1110.0,276.3 1095.3,273.4" fill="#98a2a6"/>
<polygon points="1110.0,275.4 1107.0,290.1 1107.0,291.0 1110.0,276.3" fill="#98a2a6"/>
<polygon points="1107.0,290.1 1094.3,287.1 1094.3,288.0 1107.0,291.0" fill="#98a2a6"/>
<polygon points="1094.3,287.1 1095.3,272.5 1095.3,273.4 1094.3,288.0" fill="#98a2a6"/>
<polygon points="1095.3,272.5 1110.0,275.4 1107.0,290.1 1094.3,287.1" fill="#adb7b9"/>
<polygon points="1110.9,281.2 1125.6,283.1 1124.6,298.8 1110.0,296.8" fill="#98a2a6"/>
<polygon points="1110.9,280.3 1125.6,282.2 1125.6,283.1 1110.9,281.2" fill="#98a2a6"/>
<polygon points="1125.6,282.2 1124.6,297.9 1124.6,298.8 1125.6,283.1" fill="#98a2a6"/>
<polygon points="1124.6,297.9 1110.0,295.9 1110.0,296.8 1124.6,298.8" fill="#98a2a6"/>
<polygon points="1110.0,295.9 1110.9,280.3 1110.9,281.2 1110.0,296.8" fill="#98a2a6"/>
<polygon points="1110.9,280.3 1125.6,282.2 1124.6,297.9 1110.0,295.9" fill="#adb7b9"/>
<polygon points="1054.2,283.1 1068.9,286.1 1067.0,299.8 1053.3,297.8" fill="#98a2a6"/>
<polygon points="1054.2,282.2 1068.9,285.2 1068.9,286.1 1054.2,283.1" fill="#98a2a6"/>
<polygon points="1068.9,285.2 1067.0,298.9 1067.0,299.8 1068.9,286.1" fill="#98a2a6"/>
<polygon points="1067.0,298.9 1053.3,296.9 1053.3,297.8 1067.0,299.8" fill="#98a2a6"/>
<polygon points="1053.3,296.9 1054.2,282.2 1054.2,283.1 1053.3,297.8" fill="#98a2a6"/>
<polygon points="1054.2,282.2 1068.9,285.2 1067.0,298.9 1053.3,296.9" fill="#adb7b9"/>
<polygon points="1069.9,292.9 1084.5,294.9 1083.6,309.5 1068.9,307.6" fill="#98a2a6"/>
<polygon points="1069.9,292.0 1084.5,294.0 1084.5,294.9 1069.9,292.9" fill="#98a2a6"/>
<polygon points="1084.5,294.0 1083.6,308.6 1083.6,309.5 1084.5,294.9" fill="#98a2a6"/>
<polygon points="1083.6,308.6 1068.9,306.7 1068.9,307.6 1083.6,309.5" fill="#98a2a6"/>
<polygon points="1068.9,306.7 1069.9,292.0 1069.9,292.9 1068.9,307.6" fill="#98a2a6"/>
<polygon points="1069.9,292.0 1084.5,294.0 1083.6,308.6 1068.9,306.7" fill="#adb7b9"/>
<polygon points="1086.5,302.7 1100.2,303.7 1098.2,318.3 1085.5,316.4" fill="#98a2a6"/>
<polygon points="1086.5,301.8 1100.2,302.8 1100.2,303.7 1086.5,302.7" fill="#98a2a6"/>
<polygon points="1100.2,302.8 1098.2,317.4 1098.2,318.3 1100.2,303.7" fill="#98a2a6"/>
<polygon points="1098.2,317.4 1085.5,315.5 1085.5,316.4 1098.2,318.3" fill="#98a2a6"/>
<polygon points="1085.5,315.5 1086.5,301.8 1086.5,302.7 1085.5,316.4" fill="#98a2a6"/>
<polygon points="1086.5,301.8 1100.2,302.8 1098.2,317.4 1085.5,315.5" fill="#adb7b9"/>
<polygon points="1061.1,299.8 1065.0,299.8 1064.0,311.5 1061.1,311.5" fill="#98a2a6"/>
<polygon points="1061.1,298.9 1065.0,298.9 1065.0,299.8 1061.1,299.8" fill="#98a2a6"/>
<polygon points="1065.0,298.9 1064.0,310.6 1064.0,311.5 1065.0,299.8" fill="#98a2a6"/>
<polygon points="1064.0,310.6 1061.1,310.6 1061.1,311.5 1064.0,311.5" fill="#98a2a6"/>
<polygon points="1061.1,310.6 1061.1,298.9 1061.1,299.8 1061.1,311.5" fill="#98a2a6"/>
<polygon points="1061.1,298.9 1065.0,298.9 1064.0,310.6 1061.1,310.6" fill="#adb7b9"/>
<polygon points="1129.4,260.7 1136.2,257.8 1140.1,266.6 1133.3,269.5" fill="#b1bbbd"/>
<polygon points="1137.2,275.4 1146.0,270.5 1151.9,279.3 1144.0,286.2" fill="#b1bbbd"/>
<polygon points="1080.3,365.5 1109.8,368.5 1108.8,394.0 1080.0,389.0" fill="#a3acb2"/>
<polygon points="1060.9,376.8 1067.7,375.9 1068.7,384.7 1060.9,384.7" fill="#b1bbbd"/>
<rect x="1115.800" y="366.500" width="12" height="14.500" fill="#b4c0c0" transform="rotate(5 1121.8 373.7)"/>
<polygon points="1198.9,209.4 1209.7,200.6 1229.2,202.6 1233.1,210.4 1241.9,216.3 1249.7,220.2 1262.4,233.8 1251.7,249.5 1231.2,235.8 1233.1,230.9 1223.4,224.1 1204.8,220.2" fill="#7f8790"/>
<polygon points="1199.7,207.0 1210.5,198.2 1209.7,200.6 1198.9,209.4" fill="#7f8790"/>
<polygon points="1210.5,198.2 1230.0,200.2 1229.2,202.6 1209.7,200.6" fill="#7f8790"/>
<polygon points="1230.0,200.2 1233.9,208.0 1233.1,210.4 1229.2,202.6" fill="#7f8790"/>
<polygon points="1233.9,208.0 1242.7,213.9 1241.9,216.3 1233.1,210.4" fill="#7f8790"/>
<polygon points="1242.7,213.9 1250.5,217.8 1249.7,220.2 1241.9,216.3" fill="#7f8790"/>
<polygon points="1250.5,217.8 1263.2,231.4 1262.4,233.8 1249.7,220.2" fill="#7f8790"/>
<polygon points="1263.2,231.4 1252.5,247.1 1251.7,249.5 1262.4,233.8" fill="#7f8790"/>
<polygon points="1252.5,247.1 1232.0,233.4 1231.2,235.8 1251.7,249.5" fill="#7f8790"/>
<polygon points="1232.0,233.4 1233.9,228.5 1233.1,230.9 1231.2,235.8" fill="#7f8790"/>
<polygon points="1233.9,228.5 1224.2,221.7 1223.4,224.1 1233.1,230.9" fill="#7f8790"/>
<polygon points="1224.2,221.7 1205.6,217.8 1204.8,220.2 1223.4,224.1" fill="#7f8790"/>
<polygon points="1205.6,217.8 1199.7,207.0 1198.9,209.4 1204.8,220.2" fill="#7f8790"/>
<polygon points="1199.7,207.0 1210.5,198.2 1230.0,200.2 1233.9,208.0 1242.7,213.9 1250.5,217.8 1263.2,231.4 1252.5,247.1 1232.0,233.4 1233.9,228.5 1224.2,221.7 1205.6,217.8" fill="#9ca4ab"/>
<polygon points="1261.3,237.3 1272.0,225.6 1276.9,229.5 1267.2,243.2" fill="#b1bbbd"/>
<polygon points="1188.0,228.7 1216.3,235.6 1214.4,244.4 1186.0,238.5" fill="#858d95"/>
<polygon points="1188.0,227.5 1216.3,234.4 1216.3,235.6 1188.0,228.7" fill="#858d95"/>
<polygon points="1216.3,234.4 1214.4,243.2 1214.4,244.4 1216.3,235.6" fill="#858d95"/>
<polygon points="1214.4,243.2 1186.0,237.3 1186.0,238.5 1214.4,244.4" fill="#858d95"/>
<polygon points="1186.0,237.3 1188.0,227.5 1188.0,228.7 1186.0,238.5" fill="#858d95"/>
<polygon points="1188.0,227.5 1216.3,234.4 1214.4,243.2 1186.0,237.3" fill="#a3acb2"/>
<polygon points="1217.3,236.3 1228.1,239.3 1226.1,247.1 1216.3,244.2" fill="#b1bbbd"/>
<polygon points="1214.0,261.0 1232.6,263.9 1234.5,255.1 1244.3,257.1 1243.3,265.9 1255.0,267.8 1252.1,278.6 1240.4,276.6 1238.4,281.5 1212.0,273.7" fill="#858d95"/>
<polygon points="1214.4,258.8 1233.0,261.7 1232.6,263.9 1214.0,261.0" fill="#858d95"/>
<polygon points="1233.0,261.7 1234.9,252.9 1234.5,255.1 1232.6,263.9" fill="#858d95"/>
<polygon points="1234.9,252.9 1244.7,254.9 1244.3,257.1 1234.5,255.1" fill="#858d95"/>
<polygon points="1244.7,254.9 1243.7,263.7 1243.3,265.9 1244.3,257.1" fill="#858d95"/>
<polygon points="1243.7,263.7 1255.4,265.6 1255.0,267.8 1243.3,265.9" fill="#858d95"/>
<polygon points="1255.4,265.6 1252.5,276.4 1252.1,278.6 1255.0,267.8" fill="#858d95"/>
<polygon points="1252.5,276.4 1240.8,274.4 1240.4,276.6 1252.1,278.6" fill="#858d95"/>
<polygon points="1240.8,274.4 1238.8,279.3 1238.4,281.5 1240.4,276.6" fill="#858d95"/>
<polygon points="1238.8,279.3 1212.4,271.5 1212.0,273.7 1238.4,281.5" fill="#858d95"/>
<polygon points="1212.4,271.5 1214.4,258.8 1214.0,261.0 1212.0,273.7" fill="#858d95"/>
<polygon points="1214.4,258.8 1233.0,261.7 1234.9,252.9 1244.7,254.9 1243.7,263.7 1255.4,265.6 1252.5,276.4 1240.8,274.4 1238.8,279.3 1212.4,271.5" fill="#a3acb2"/>
<polygon points="1264.6,302.8 1290.9,300.8 1290.9,325.3 1268.5,326.2 1269.5,317.4 1265.6,315.5" fill="#858d95"/>
<polygon points="1266.2,301.8 1292.5,299.8 1290.9,300.8 1264.6,302.8" fill="#858d95"/>
<polygon points="1292.5,299.8 1292.5,324.3 1290.9,325.3 1290.9,300.8" fill="#858d95"/>
<polygon points="1292.5,324.3 1270.1,325.2 1268.5,326.2 1290.9,325.3" fill="#858d95"/>
<polygon points="1270.1,325.2 1271.1,316.4 1269.5,317.4 1268.5,326.2" fill="#858d95"/>
<polygon points="1271.1,316.4 1267.2,314.5 1265.6,315.5 1269.5,317.4" fill="#858d95"/>
<polygon points="1267.2,314.5 1266.2,301.8 1264.6,302.8 1265.6,315.5" fill="#858d95"/>
<polygon points="1266.2,301.8 1292.5,299.8 1292.5,324.3 1270.1,325.2 1271.1,316.4 1267.2,314.5" fill="#a7b0b5"/>
<polygon points="1271.1,277.4 1280.8,275.4 1286.7,283.2 1276.9,289.1" fill="#b1bbbd"/>
<polygon points="1284.0,268.0 1292.5,264.0 1292.5,276.0 1288.0,277.0" fill="#b1bbbd"/>
<polygon points="817.6,347.7 828.4,342.8 835.2,349.7 830.3,357.5 818.6,350.6" fill="#a9b2b6"/>
<polygon points="837.2,350.6 842.1,348.7 844.0,355.5 839.1,357.1" fill="#a9b2b6"/>
<polygon points="846.0,349.7 863.6,359.4 856.7,369.2 847.9,364.3 850.9,359.4 843.0,355.5" fill="#a9b2b6"/>
<polygon points="866.5,362.2 904.6,381.8 899.7,392.5 893.9,388.6 896.8,382.8 862.6,368.1" fill="#a3acb2"/>
<polygon points="905.0,392.5 933.3,405.2 931.4,410.1 903.1,396.4" fill="#a9b2b6"/>
<polygon points="935.3,394.4 943.1,396.4 941.2,403.2 933.9,401.3" fill="#b1bbbd"/>
<polygon points="915.2,388.6 919.7,388.6 919.7,392.5 915.2,392.5" fill="#b1bbbd"/>
<polygon points="949.0,407.1 985.1,416.9 985.1,423.7 947.0,414.0" fill="#a9b2b6"/>
<polygon points="1028.1,429.6 1052.6,439.4 1051.6,444.3 1044.7,443.3 1025.2,436.4" fill="#a9b2b6"/>
<polygon points="1095.1,437.4 1104.8,432.5 1111.7,438.4 1109.7,445.2 1097.0,440.4" fill="#a9b2b6"/>
<polygon points="1147.800,447.200 1160.500,446.200 1161.500,459.900 1148.800,461.500" fill="#bdc9c8" stroke="#aab6b7" stroke-width="0.4"/>
<polygon points="1161.5,500.5 1171.3,503.5 1169.3,509.3 1159.6,506.4" fill="#a9b2b6"/><text x="690.6" y="123.4" font-size="6.1" text-anchor="middle" fill="#656e75">101</text>
<text x="732.6" y="182.8" font-size="6.1" text-anchor="middle" fill="#656e75">101к5</text>
<text x="857.7" y="151.6" font-size="6.1" text-anchor="middle" fill="#656e75">101к4</text>
<text x="733.2" y="217.6" font-size="6.1" text-anchor="middle" fill="#656e75">103/4</text>
<text x="797.7" y="210.8" font-size="6.1" text-anchor="middle" fill="#656e75">103к5</text>
<text x="848.9" y="227.8" font-size="6.1" text-anchor="middle" fill="#656e75">103/3</text>
<text x="976.7" y="202.8" font-size="6.1" text-anchor="middle" fill="#656e75">105</text>
<text x="1101.5" y="143.2" font-size="6.1" text-anchor="middle" fill="#656e75">104</text>
<text x="1046.0" y="232.7" font-size="6.1" text-anchor="middle" fill="#656e75">105Б</text>
<text x="1247.6" y="236.6" font-size="6.1" text-anchor="middle" fill="#656e75">106Б</text>
<text x="1236.9" y="269.4" font-size="6.1" text-anchor="middle" fill="#656e75">106</text>
<text x="1276.9" y="310.8" font-size="6.1" text-anchor="middle" fill="#656e75">108/16</text>
<text x="1086.5" y="274.7" font-size="6.1" text-anchor="middle" fill="#656e75">105Г</text>
<text x="1060.5" y="293.6" font-size="6.1" text-anchor="middle" fill="#656e75">105/1</text>
<text x="1077.3" y="303.6" font-size="6.1" text-anchor="middle" fill="#656e75">105/2</text>
<text x="1117.8" y="291.3" font-size="6.1" text-anchor="middle" fill="#656e75">105Е</text>
<text x="1019.7" y="328.8" font-size="6.1" text-anchor="middle" fill="#656e75">105А</text>
<text x="887.4" y="379.1" font-size="6.1" text-anchor="middle" fill="#656e75">103А</text>
<circle cx="891.5" cy="188.4" r="4.7" fill="#4a525c" stroke="#c9d4d3" stroke-width="0.6"/>
<path d="M889.1,190.6 L891.7,187.8 L893.9,186.0 M890.9,186.8 L891.7,187.8 L893.1,189.8" fill="none" stroke="#dfe5e4" stroke-width="1" stroke-linecap="round"/>
<text x="892.9" y="201.0" font-size="6.7" text-anchor="middle" fill="#454d5c" font-weight="400" stroke="#d3dcdb" stroke-width="1.2" stroke-linejoin="round" paint-order="stroke" textLength="24.5" lengthAdjust="spacingAndGlyphs">Юность</text>
<circle cx="1044.5" cy="166.6" r="4.7" fill="#6c757c" stroke="#c9d4d3" stroke-width="0.6"/>
<path d="M1043.0,164.0 v2 a0.9,0.9 0 0 0 0.9,0.9 v2.6 M1045.8,164.0 q-1.2,1.6 0,3 v2.500" fill="none" stroke="#dfe5e4" stroke-width="0.8" stroke-linecap="round"/>
<text x="1045.5" y="179.7" font-size="6.7" text-anchor="middle" fill="#454d5c" font-weight="400" stroke="#d3dcdb" stroke-width="1.2" stroke-linejoin="round" paint-order="stroke" textLength="46" lengthAdjust="spacingAndGlyphs">Черетто Море</text>
<circle cx="1087.1" cy="227.1" r="4.7" fill="#6c757c" stroke="#c9d4d3" stroke-width="0.6"/>
<path d="M1085.6,224.5 v2 a0.9,0.9 0 0 0 0.9,0.9 v2.6 M1088.4,224.5 q-1.2,1.6 0,3 v2.500" fill="none" stroke="#dfe5e4" stroke-width="0.8" stroke-linecap="round"/>
<text x="1086.9" y="240.1" font-size="6.7" text-anchor="middle" fill="#454d5c" font-weight="400" stroke="#d3dcdb" stroke-width="1.2" stroke-linejoin="round" paint-order="stroke" textLength="36" lengthAdjust="spacingAndGlyphs">La Terrazza</text>
<circle cx="1043.5" cy="250.0" r="4.7" fill="#5b6576" stroke="#c9d4d3" stroke-width="0.6"/>
<path d="M1041.1,252.2 L1043.7,249.4 L1045.9,247.6 M1042.9,248.4 L1043.7,249.4 L1045.1,251.4" fill="none" stroke="#dfe5e4" stroke-width="1" stroke-linecap="round"/>
<text x="1043.5" y="261.8" font-size="6.7" text-anchor="middle" fill="#6a737a" font-weight="400" stroke="#d3dcdb" stroke-width="1.2" stroke-linejoin="round" paint-order="stroke" textLength="26" lengthAdjust="spacingAndGlyphs">Бассейн</text>
<circle cx="941.9" cy="264.7" r="4.7" fill="#5b6576" stroke="#c9d4d3" stroke-width="0.6"/>
<path d="M939.5,266.9 L942.1,264.1 L944.3,262.3 M941.3,263.1 L942.1,264.1 L943.5,266.1" fill="none" stroke="#dfe5e4" stroke-width="1" stroke-linecap="round"/>
<text x="941.9" y="277.4" font-size="6.7" text-anchor="middle" fill="#6a737a" font-weight="400" stroke="#d3dcdb" stroke-width="1.2" stroke-linejoin="round" paint-order="stroke" textLength="26" lengthAdjust="spacingAndGlyphs">Бассейн</text>
<circle cx="969.8" cy="318.4" r="4.7" fill="#4a525c" stroke="#c9d4d3" stroke-width="0.6"/>
<path d="M967.4,320.6 L970.0,317.8 L972.2,316.0 M969.2,316.8 L970.0,317.8 L971.4,319.8" fill="none" stroke="#dfe5e4" stroke-width="1" stroke-linecap="round"/>
<text x="970.6" y="331.5" font-size="6.7" text-anchor="middle" fill="#454d5c" font-weight="400" stroke="#d3dcdb" stroke-width="1.2" stroke-linejoin="round" paint-order="stroke" textLength="18.5" lengthAdjust="spacingAndGlyphs">Актер</text>
<circle cx="749.8" cy="310.6" r="4.7" fill="#4a525c" stroke="#c9d4d3" stroke-width="0.6"/>
<path d="M746.8,310.8 Q749.3,306.8 752.9,309.7 Z" fill="#dfe5e4"/>
<path d="M747.2,313.2 Q750.1,311.8 752.8,312.8" fill="none" stroke="#dfe5e4" stroke-width="0.8"/>
<text x="749.2" y="322.8" font-size="6.7" text-anchor="middle" fill="#454d5c" font-weight="400" stroke="#d3dcdb" stroke-width="1.2" stroke-linejoin="round" paint-order="stroke" textLength="50.8" lengthAdjust="spacingAndGlyphs">Пляж Лазурная</text>
<circle cx="916.1" cy="407.1" r="4.7" fill="#4a525c" stroke="#c9d4d3" stroke-width="0.6"/>
<path d="M913.1,407.3 Q915.6,403.3 919.2,406.2 Z" fill="#dfe5e4"/>
<path d="M913.5,409.7 Q916.4,408.3 919.1,409.3" fill="none" stroke="#dfe5e4" stroke-width="0.8"/>
<text x="915.8" y="419.9" font-size="6.7" text-anchor="middle" fill="#454d5c" font-weight="400" stroke="#d3dcdb" stroke-width="1.2" stroke-linejoin="round" paint-order="stroke" textLength="39" lengthAdjust="spacingAndGlyphs">Пляж Актёр</text>
<circle cx="1121.8" cy="376.4" r="5.4" fill="#454d60" stroke="#c9d4d3" stroke-width="0.6"/>
<path d="M1119.1,378.3 v-1.8 h5.4 v1.8 M1119.7,376.5 v-1.500 h2 v1.500 M1121.7,376.5 v-1 q2,-0.3 1.900,1" fill="#dfe5e4" stroke="#dfe5e4" stroke-width="0.6"/>
<text x="1121.4" y="389.0" font-size="6.7" text-anchor="middle" fill="#454d5c" font-weight="400" stroke="#d3dcdb" stroke-width="1.2" stroke-linejoin="round" paint-order="stroke" textLength="52.8" lengthAdjust="spacingAndGlyphs">Вилла Полианна</text>
<circle cx="1116.2" cy="438.4" r="4.7" fill="#3c4454" stroke="#c9d4d3" stroke-width="0.6"/>
<path d="M1113.4,439.0 h5.6 l-1,2 h-3.600 Z M1114.8,438.6 v-1.800 h2.800 v1.800 Z" fill="#dfe5e4"/>
<text x="1123.8" y="437.9" font-size="6.7" text-anchor="start" fill="#454d5c" font-weight="400" stroke="#d3dcdb" stroke-width="1.2" stroke-linejoin="round" paint-order="stroke" textLength="32" lengthAdjust="spacingAndGlyphs">Sup-Wind-</text>
<text x="1123.8" y="446.3" font-size="6.7" text-anchor="start" fill="#454d5c" font-weight="400" stroke="#d3dcdb" stroke-width="1.2" stroke-linejoin="round" paint-order="stroke" textLength="34.5" lengthAdjust="spacingAndGlyphs">Club-Zarya</text>
<circle cx="1089.6" cy="463.4" r="4.7" fill="#4a525c" stroke="#c9d4d3" stroke-width="0.6"/>
<path d="M1086.6,463.6 Q1089.1,459.6 1092.7,462.5 Z" fill="#dfe5e4"/>
<path d="M1087.0,466.0 Q1089.9,464.6 1092.6,465.6" fill="none" stroke="#dfe5e4" stroke-width="0.8"/>
<text x="1089.6" y="476.0" font-size="6.7" text-anchor="middle" fill="#454d5c" font-weight="400" stroke="#d3dcdb" stroke-width="1.2" stroke-linejoin="round" paint-order="stroke" textLength="14.5" lengthAdjust="spacingAndGlyphs">Заря</text>
<circle cx="1165.4" cy="510.9" r="4.7" fill="#59626b" stroke="#c9d4d3" stroke-width="0.6"/>
<path d="M1163.0,508.9 h4.800 q0,3.200 -2.400,3.400 q-2.400,-0.200 -2.400,-3.400 Z M1163.9,513.6 h3" fill="#dfe5e4" stroke="#dfe5e4" stroke-width="0.600"/>
<text x="1165.4" y="524.4" font-size="6.7" text-anchor="middle" fill="#6f787f" font-weight="400" stroke="#a9b3b6" stroke-width="1.2" stroke-linejoin="round" paint-order="stroke" textLength="29" lengthAdjust="spacingAndGlyphs">Адмирал</text>
<text x="1165.4" y="531.8" font-size="6.7" text-anchor="middle" fill="#6f787f" font-weight="400" stroke="#a9b3b6" stroke-width="1.2" stroke-linejoin="round" paint-order="stroke" textLength="37" lengthAdjust="spacingAndGlyphs">причал-310</text>
<circle cx="1192.9" cy="235.3" r="4.7" fill="#6c757c" stroke="#c9d4d3" stroke-width="0.6"/>
<path d="M1191.3,238.1 v-5.400 h3.600 l-0.9,1.400 l0.9,1.400 h-3.600" fill="#dfe5e4" stroke="#dfe5e4" stroke-width="0.5"/>
<text x="1193.5" y="248.4" font-size="6.7" text-anchor="middle" fill="#5b636b" font-weight="700" stroke="#d3dcdb" stroke-width="1.2" stroke-linejoin="round" paint-order="stroke" textLength="51.8" lengthAdjust="spacingAndGlyphs">Администрация</text>
<text x="1194.5" y="256.1" font-size="6.7" text-anchor="middle" fill="#5b636b" font-weight="700" stroke="#d3dcdb" stroke-width="1.2" stroke-linejoin="round" paint-order="stroke" textLength="23.5" lengthAdjust="spacingAndGlyphs">района</text>
<circle cx="1267.7" cy="284.8" r="4.7" fill="#6c757c" stroke="#c9d4d3" stroke-width="0.6"/>
<path d="M1265.3,282.8 h4.800 q0,3.200 -2.400,3.400 q-2.400,-0.200 -2.400,-3.400 Z M1266.2,287.5 h3" fill="#dfe5e4" stroke="#dfe5e4" stroke-width="0.600"/>
<text x="1268.1" y="298.3" font-size="6.7" text-anchor="middle" fill="#454d5c" font-weight="400" stroke="#d3dcdb" stroke-width="1.2" stroke-linejoin="round" paint-order="stroke" textLength="43" lengthAdjust="spacingAndGlyphs">Привет Багет</text>
<circle cx="1277.9" cy="264.7" r="4.7" fill="#4a525c" stroke="#c9d4d3" stroke-width="0.6"/>
<path d="M1276.4,262.1 v2 a0.9,0.9 0 0 0 0.9,0.9 v2.6 M1279.2,262.1 q-1.2,1.6 0,3 v2.500" fill="none" stroke="#dfe5e4" stroke-width="0.8" stroke-linecap="round"/>
<text x="1284.7" y="265.1" font-size="6.7" text-anchor="start" fill="#454d5c" font-weight="400" stroke="#d3dcdb" stroke-width="1.2" stroke-linejoin="round" paint-order="stroke">Ex</text>
<text x="1284.7" y="271.9" font-size="6.7" text-anchor="start" fill="#454d5c" font-weight="400" stroke="#d3dcdb" stroke-width="1.2" stroke-linejoin="round" paint-order="stroke">Za</text>
<text x="1283.8" y="195.7" font-size="6.7" text-anchor="start" fill="#454d5c" font-weight="400" stroke="#d3dcdb" stroke-width="1.2" stroke-linejoin="round" paint-order="stroke">Им</text>
<rect x="1129.4" y="203.1" width="7.8" height="7.8" rx="1.5" fill="#2f3b55"/>
<rect x="1131.1" y="204.7" width="4.400" height="3.800" rx="0.7" fill="none" stroke="#cfd6e6" stroke-width="0.7"/><path d="M1131.7,209.4 h0.900 M1134.0,209.4 h0.900" stroke="#cfd6e6" stroke-width="0.800"/>
<rect x="1194.5" y="313.5" width="7.8" height="7.8" rx="1.5" fill="#2f3b55"/>
<rect x="1196.2" y="315.1" width="4.400" height="3.800" rx="0.7" fill="none" stroke="#cfd6e6" stroke-width="0.7"/><path d="M1196.8,319.8 h0.900 M1199.1,319.8 h0.900" stroke="#cfd6e6" stroke-width="0.800"/>
<rect x="1242.7" y="323.9" width="7.8" height="7.8" rx="1.5" fill="#2f3b55"/>
<rect x="1244.4" y="325.5" width="4.400" height="3.800" rx="0.7" fill="none" stroke="#cfd6e6" stroke-width="0.7"/><path d="M1245.0,330.2 h0.900 M1247.3,330.2 h0.900" stroke="#cfd6e6" stroke-width="0.800"/>
<text transform="translate(1187.2 290.0) rotate(48.4)" font-size="8.0" fill="#22282e" font-weight="400" stroke="#22282e" stroke-width="0.22" textLength="70.6" lengthAdjust="spacingAndGlyphs">Курортный просп.</text>
<text transform="translate(1035.8 105.2) rotate(50.3)" font-size="8.0" fill="#22282e" font-weight="400" stroke="#22282e" stroke-width="0.22" textLength="70.6" lengthAdjust="spacingAndGlyphs">Курортный просп.</text>
<text transform="translate(1253.4 456.8) rotate(51.1)" font-size="7.1" fill="#2a3036" font-weight="400" stroke="#2a3036" stroke-width="0.22" textLength="52" lengthAdjust="spacingAndGlyphs">Тропа здоровья</text>
<defs><linearGradient id="pg" x1="0" x2="1" y1="0" y2="0"><stop offset="0" stop-color="#f46c6c"/><stop offset=".7" stop-color="#f26a6a"/><stop offset="1" stop-color="#d95f62"/></linearGradient></defs>
<path d="M983.2,397.4 C980.5,392.5 972.9,387.8 972.9,381.3 A10.300,10.300 0 0 1 993.500,381.300 C993.500,387.800 985.900,392.500 983.200,397.400 Z" fill="url(#pg)"/>
<circle cx="983.2" cy="381.2" r="2.2" fill="#d7dedd"/><circle cx="983.2" cy="381.2" r="1" fill="#f26a6a" opacity=".0"/>
</svg>
</div>
<div class="abs mbtn" style="left:1196.4px;top:149.1px;width:68.5px;height:24.4px"></div>
<div class="abs caret" style="left:1246.1px;top:160.4px"></div>
<div class="abs mbtn" style="left:1237.3px;top:543px;width:27.7px;height:27.6px"></div>
<div class="abs mbtn" style="left:1237.3px;top:577.3px;width:27.7px;height:27.6px"></div>
<svg class="ic" style="left:1237px;top:543px" width="28" height="62" viewBox="1237 543 28 62"><g stroke="#2c3648" stroke-width="1.35" fill="none"><path d="M1246.400,556.900 h9.500 M1246.400,591.200 h9.500 M1251.150,586.450 v9.500"/></g></svg>
<div class="abs scroll"></div>

<!-- logo -->
<svg class="ic" style="left:28px;top:26px" width="22" height="19" viewBox="28 26 22 19">
<defs>
<linearGradient id="lgL" x1="0" x2="1" y1="0" y2="0"><stop offset="0" stop-color="#a78ce0"/><stop offset=".25" stop-color="#8b94e6"/><stop offset=".5" stop-color="#4a8ce8"/><stop offset="1" stop-color="#4f8ae4"/></linearGradient>
<linearGradient id="lgR" x1="0" x2="0" y1="0" y2="1"><stop offset="0" stop-color="#f45a8c"/><stop offset=".45" stop-color="#f8788a"/><stop offset=".55" stop-color="#fda07c"/><stop offset="1" stop-color="#ffa878"/></linearGradient>
</defs>
<polygon points="28.8,30.6 38.2,33 38.2,38 28.8,40.4" fill="url(#lgL)"/>
<polygon points="38.2,33 40.2,33 40.2,38 38.2,38" fill="#a9adb3"/>
<polygon points="40.2,33 48.4,30.6 48.4,40.4 40.2,38" fill="url(#lgR)"/>
<polygon points="28.7,29.4 38.5,27.1 48.4,29.4 48.4,30.9 38.5,33.3 28.7,30.9" fill="#232d41"/>
<polygon points="28.7,40.1 38.5,37.7 48.4,40.1 48.4,41.6 38.5,43.9 28.7,41.6" fill="#232d41"/>
</svg>
<!-- person -->
<svg class="ic" style="left:28.2px;top:60.5px" width="20.4" height="20.4" viewBox="0 0 24 24"><path fill="#2a3447" d="M12 12c2.21 0 4-1.79 4-4s-1.790-4-4-4-4 1.790-4 4 1.790 4 4 4zm0 2c-2.670 0-8 1.340-8 4v2h16v-2c0-2.660-5.330-4-8-4z"/></svg>
<!-- document -->
<svg class="ic" style="left:30.1px;top:96.9px" width="16.5" height="16.5" viewBox="0 0 24 24"><path fill="#fff" d="M8 16h8v2H8zm0-4h8v2H8zm6-10H6c-1.100 0-2 .9-2 2v16c0 1.100.890 2 1.990 2H18c1.100 0 2-.9 2-2V8l-6-6zm4 18H6V4h7v5h5v11z"/></svg>
<!-- book dark -->
<svg class="ic" style="left:30.2px;top:130.9px" width="16.5" height="16.5" viewBox="0 0 24 24"><g fill="#2a3447"><path d="M21 5c-1.110-.350-2.330-.500-3.500-.500-1.950 0-4.050.400-5.500 1.500-1.450-1.100-3.550-1.500-5.500-1.500S2.450 4.900 1 6v14.650c0 .25.250.5.5.5.1 0 .150-.050.250-.050C3.100 20.450 5.050 20 6.500 20c1.950 0 4.050.400 5.500 1.500 1.350-.850 3.800-1.500 5.500-1.500 1.650 0 3.350.3 4.750 1.050.1.050.150.050.250.050.250 0 .5-.250.5-.5V6c-.6-.450-1.250-.750-2-1zm0 13.500c-1.100-.350-2.300-.500-3.500-.500-1.700 0-4.150.650-5.500 1.500V8c1.350-.850 3.800-1.500 5.500-1.500 1.200 0 2.400.150 3.500.500v11.500z"/><path d="M17.500 10.500c.880 0 1.730.090 2.500.260V9.240c-.790-.150-1.640-.240-2.500-.240-1.700 0-3.240.290-4.500.830v1.660c1.130-.640 2.700-.990 4.500-.990zM13 12.490v1.660c1.130-.640 2.700-.990 4.500-.990.880 0 1.730.090 2.500.260V11.900c-.790-.150-1.640-.240-2.500-.240-1.700 0-3.240.3-4.500.830zm4.500 1.840c-1.700 0-3.240.290-4.500.830v1.660c1.130-.640 2.700-.990 4.500-.990.880 0 1.730.090 2.500.260v-1.520c-.790-.160-1.640-.240-2.500-.240z"/></g></svg>
<!-- double chevron -->
<svg class="ic" style="left:30px;top:650px" width="17" height="16" viewBox="30 650 17 16"><g fill="none" stroke="#2a3447" stroke-width="1.9" stroke-linejoin="miter"><polyline points="37.6,652.6 32.6,658 37.6,663.4"/><polyline points="44.6,652.6 39.6,658 44.6,663.4"/></g></svg>
<!-- back arrow -->
<svg class="ic" style="left:188.9px;top:68.25px" width="16.5" height="16.5" viewBox="0 0 24 24"><path fill="#566685" d="M20 11H7.830l5.590-5.590L12 4l-8 8 8 8 1.410-1.410L7.830 13H20v-2z"/></svg>
<!-- search -->
<svg class="ic" style="left:861px;top:27px" width="17" height="17" viewBox="861 27 17 17"><circle cx="868.1" cy="34.3" r="3.85" fill="none" stroke="#52617f" stroke-width="1.55"/><line x1="870.9" y1="37.2" x2="875" y2="41.2" stroke="#52617f" stroke-width="1.7" stroke-linecap="round"/></svg>
<!-- avatar -->
<svg class="ic" style="left:978.9px;top:21.8px" width="27.4" height="27.4" viewBox="0 0 27.4 27.4">
<defs><clipPath id="avc"><circle cx="13.7" cy="13.7" r="13.6"/></clipPath><filter id="avb" x="-10%" y="-10%" width="120%" height="120%"><feGaussianBlur stdDeviation="0.55"/></filter></defs>
<g clip-path="url(#avc)"><g filter="url(#avb)">
<rect x="-2" y="-2" width="32" height="32" fill="#d4c6b5"/>
<rect x="22.400" y="8" width="6" height="4.600" rx="1.500" fill="#7f9bd0"/>
<rect x="17" y="23.500" width="9" height="6" fill="#e8e2df"/>
<ellipse cx="4.900" cy="15.600" rx="1.500" ry="2.300" fill="#c98c78"/>
<ellipse cx="21.900" cy="15.600" rx="1.300" ry="2.200" fill="#c98c78"/>
<path d="M5.400 12 Q5.400 5 13.400 5 Q21.600 5 21.600 12 L21.400 18.500 Q20.600 24.500 16.500 27 Q13.400 28.600 10.300 27 Q6.200 24.500 5.600 18.500 Z" fill="#d89d86"/>
<path d="M7 19 Q8 25 11 27 Q13.400 28.200 15.800 27 Q19 25 20 19 Q17 23.500 13.400 23.600 Q10 23.500 7 19 Z" fill="#c4846f"/>
<ellipse cx="13.900" cy="10" rx="5" ry="2.600" fill="#e4ad96"/>
<path d="M4.600 16.500 Q3.600 9 5.500 5.500 Q8 0.700 13.800 0.500 Q20 0.600 22.300 6 Q23.300 10 22 15.500 Q21.500 10.500 19.800 8.300 Q16 8.800 12.500 6.700 Q10 9.600 7.600 10.200 Q5.800 12 5.700 16.700 Z" fill="#2a2120"/>
<ellipse cx="10.300" cy="12.700" rx="1.700" ry="0.800" fill="#4a322d"/>
<ellipse cx="16.900" cy="12.700" rx="1.700" ry="0.800" fill="#4a322d"/>
<path d="M12.300 17.200 Q13.500 18 14.700 17.200" stroke="#b37461" stroke-width="0.700" fill="none"/>
<ellipse cx="13.400" cy="20.700" rx="2" ry="0.800" fill="#3a2624"/>
<rect x="20" y="25" width="3" height="2.400" fill="#2c3a5c"/>
</g></g></svg>
<!-- chevron down -->
<svg class="ic" style="left:1093px;top:32px" width="10" height="8" viewBox="1093 32 10 8"><polyline points="1095.1,34.1 1098,37 1100.9,34.1" fill="none" stroke="#333e52" stroke-width="1.3"/></svg>
<!-- bell -->
<svg class="ic" style="left:1123.95px;top:27.2px" width="16.5" height="16.5" viewBox="0 0 24 24"><path fill="#fff" d="M12 22c1.100 0 2-.9 2-2h-4c0 1.100.890 2 2 2zm6-6v-5c0-3.070-1.640-5.640-4.500-6.320V4c0-.830-.670-1.500-1.500-1.500s-1.500.670-1.500 1.500v.680C7.630 5.360 6 7.920 6 11v5l-2 2v1h16v-1l-2-2z"/></svg>
<!-- book white -->
<svg class="ic" style="left:1160.2px;top:27.2px" width="16.500" height="16.500" viewBox="0 0 24 24"><g fill="#fff"><path d="M21 5c-1.110-.350-2.330-.500-3.500-.500-1.950 0-4.050.400-5.500 1.500-1.450-1.100-3.550-1.500-5.500-1.500S2.450 4.900 1 6v14.650c0 .25.250.5.5.5.1 0 .150-.050.250-.050C3.100 20.450 5.050 20 6.500 20c1.950 0 4.050.400 5.500 1.500 1.350-.850 3.800-1.500 5.500-1.500 1.650 0 3.350.3 4.750 1.050.1.050.150.050.250.050.250 0 .5-.250.5-.5V6c-.6-.450-1.250-.750-2-1zm0 13.500c-1.100-.350-2.300-.500-3.500-.500-1.700 0-4.150.650-5.500 1.500V8c1.350-.850 3.800-1.500 5.500-1.500 1.200 0 2.400.150 3.500.500v11.500z"/><path d="M17.500 10.500c.880 0 1.730.090 2.500.260V9.240c-.790-.150-1.640-.240-2.500-.240-1.700 0-3.240.290-4.500.830v1.660c1.130-.640 2.700-.990 4.500-.990zM13 12.490v1.660c1.130-.640 2.700-.990 4.500-.990.880 0 1.730.090 2.500.260V11.900c-.790-.150-1.640-.240-2.500-.240-1.700 0-3.240.3-4.500.830zm4.500 1.840c-1.700 0-3.240.290-4.500.830v1.660c1.130-.640 2.700-.990 4.500-.990.880 0 1.730.090 2.500.260v-1.520c-.790-.160-1.640-.240-2.500-.240z"/></g></svg>
<!-- input pin -->
<svg class="ic" style="left:579.7px;top:217.1px" width="16.5" height="16.5" viewBox="0 0 24 24"><path fill="#566a8f" d="M12 2C8.130 2 5 5.130 5 9c0 5.250 7 13 7 13s7-7.750 7-13c0-3.870-3.130-7-7-7zm0 9.500c-1.380 0-2.500-1.120-2.500-2.500s1.120-2.500 2.500-2.500 2.500 1.120 2.500 2.500-1.120 2.500-2.500 2.500z"/></svg>


<span class="t" style="left:67.40px;top:30.16px;font-size:13.9px;font-weight:700;color:#232c3f;letter-spacing:0.256px;">QC</span>
<span class="t" style="left:68.70px;top:65.63px;font-size:11px;font-weight:400;color:#3b4659;letter-spacing:0.164px;">Пользователи</span>
<span class="t" style="left:68.70px;top:98.53px;font-size:11px;font-weight:400;color:#ffffff;letter-spacing:0.243px;">Проекты</span>
<span class="t" style="left:68.70px;top:133.63px;font-size:11px;font-weight:400;color:#3b4659;letter-spacing:0.266px;">Справочники</span>
<span class="t" style="left:68.70px;top:652.93px;font-size:11px;font-weight:400;color:#3b4659;letter-spacing:0.194px;">Открепить меню</span>
<span class="t" style="left:189.00px;top:29.78px;font-size:11.7px;font-weight:700;color:#2c3648;letter-spacing:0.122px;">Добавление проекта</span>
<span class="t" style="left:883.70px;top:30.57px;font-size:10.3px;font-weight:400;color:#b9c0cf;letter-spacing:0.863px;">Поиск</span>
<span class="t" style="left:1017.70px;top:29.67px;font-size:10.8px;font-weight:700;color:#333e52;letter-spacing:-0.250px;">Иван Иванов</span>
<span class="t" style="left:1201.60px;top:29.66px;font-size:9.7px;font-weight:700;color:#ffffff;letter-spacing:-0.124px;">РЕЖИМ ПРОСМОТРА</span>
<span class="t" style="left:1208.20px;top:75.41px;font-size:9.2px;font-weight:700;color:#43914e;letter-spacing:-0.302px;">СОХРАНИТЬ ПРОЕКТ</span>
<span class="t" style="left:210.80px;top:71.66px;font-size:9.9px;font-weight:700;color:#5a6883;letter-spacing:-0.216px;">К ПРОЕКТАМ</span>
<span class="t" style="left:307.00px;top:71.66px;font-size:9.9px;font-weight:700;color:#5a6883;letter-spacing:-0.480px;">О ПРОЕКТЕ</span>
<span class="t" style="left:377.50px;top:71.66px;font-size:9.9px;font-weight:700;color:#1f4fb5;letter-spacing:-0.381px;">ДОПОЛНИТЕЛЬНО</span>
<span class="t" style="left:223.10px;top:130.84px;font-size:12.4px;font-weight:400;color:#343f52;letter-spacing:0.100px;">Адрес проекта</span>
<span class="t" style="left:223.10px;top:276.54px;font-size:12.4px;font-weight:400;color:#343f52;letter-spacing:0.458px;">Заказчик</span>
<span class="t" style="left:223.10px;top:416.54px;font-size:12.4px;font-weight:400;color:#343f52;letter-spacing:0.270px;">Подрядчики</span>
<span class="t" style="left:223.10px;top:176.01px;font-size:9.6px;font-weight:400;color:#586784;letter-spacing:0.136px;">Регион:</span>
<span class="t" style="left:223.10px;top:219.81px;font-size:9.6px;font-weight:400;color:#586784;">Город, улица, дом:</span>
<span class="t" style="left:223.10px;top:320.91px;font-size:9.6px;font-weight:400;color:#586784;letter-spacing:0.190px;">Компания:</span>
<span class="t" style="left:223.10px;top:358.51px;font-size:9.6px;font-weight:400;color:#586784;letter-spacing:0.018px;">Куратор:</span>
<span class="t" style="left:223.10px;top:460.91px;font-size:9.6px;font-weight:400;color:#3a4558;letter-spacing:0.190px;">Компания:</span>
<span class="t" style="left:223.10px;top:499.31px;font-size:9.6px;font-weight:400;color:#cfd4df;letter-spacing:0.155px;">Ответственный:</span>
<span class="t" style="left:355.00px;top:175.91px;font-size:9.6px;font-weight:400;color:#a3abbb;letter-spacing:0.102px;">Выберите регион</span>
<span class="t" style="left:355.00px;top:220.11px;font-size:9.6px;font-weight:400;color:#a3abbb;letter-spacing:0.135px;">Напишите адрес проекта</span>
<span class="t" style="left:355.00px;top:320.91px;font-size:9.6px;font-weight:400;color:#a3abbb;letter-spacing:0.177px;">Введите название или выберите из списка</span>
<span class="t" style="left:355.00px;top:358.51px;font-size:9.6px;font-weight:400;color:#a3abbb;letter-spacing:0.116px;">Введите ФИО или выберите из списка</span>
<span class="t" style="left:355.00px;top:460.91px;font-size:9.6px;font-weight:400;color:#a3abbb;letter-spacing:0.177px;">Введите название или выберите из списка</span>
<span class="t" style="left:355.00px;top:499.31px;font-size:9.6px;font-weight:400;color:#d3d7e1;letter-spacing:0.116px;">Введите ФИО или выберите из списка</span>
<span class="t" style="left:519.90px;top:528.27px;font-size:8.25px;font-weight:400;color:#a3abbb;letter-spacing:0.110px;">Добавить подрядчика</span>
<span class="t" style="left:1207.60px;top:157.20px;font-size:8.6px;font-weight:700;color:#333e52;letter-spacing:0.279px;">КАРТА</span>
</div>
</body>
</html>
